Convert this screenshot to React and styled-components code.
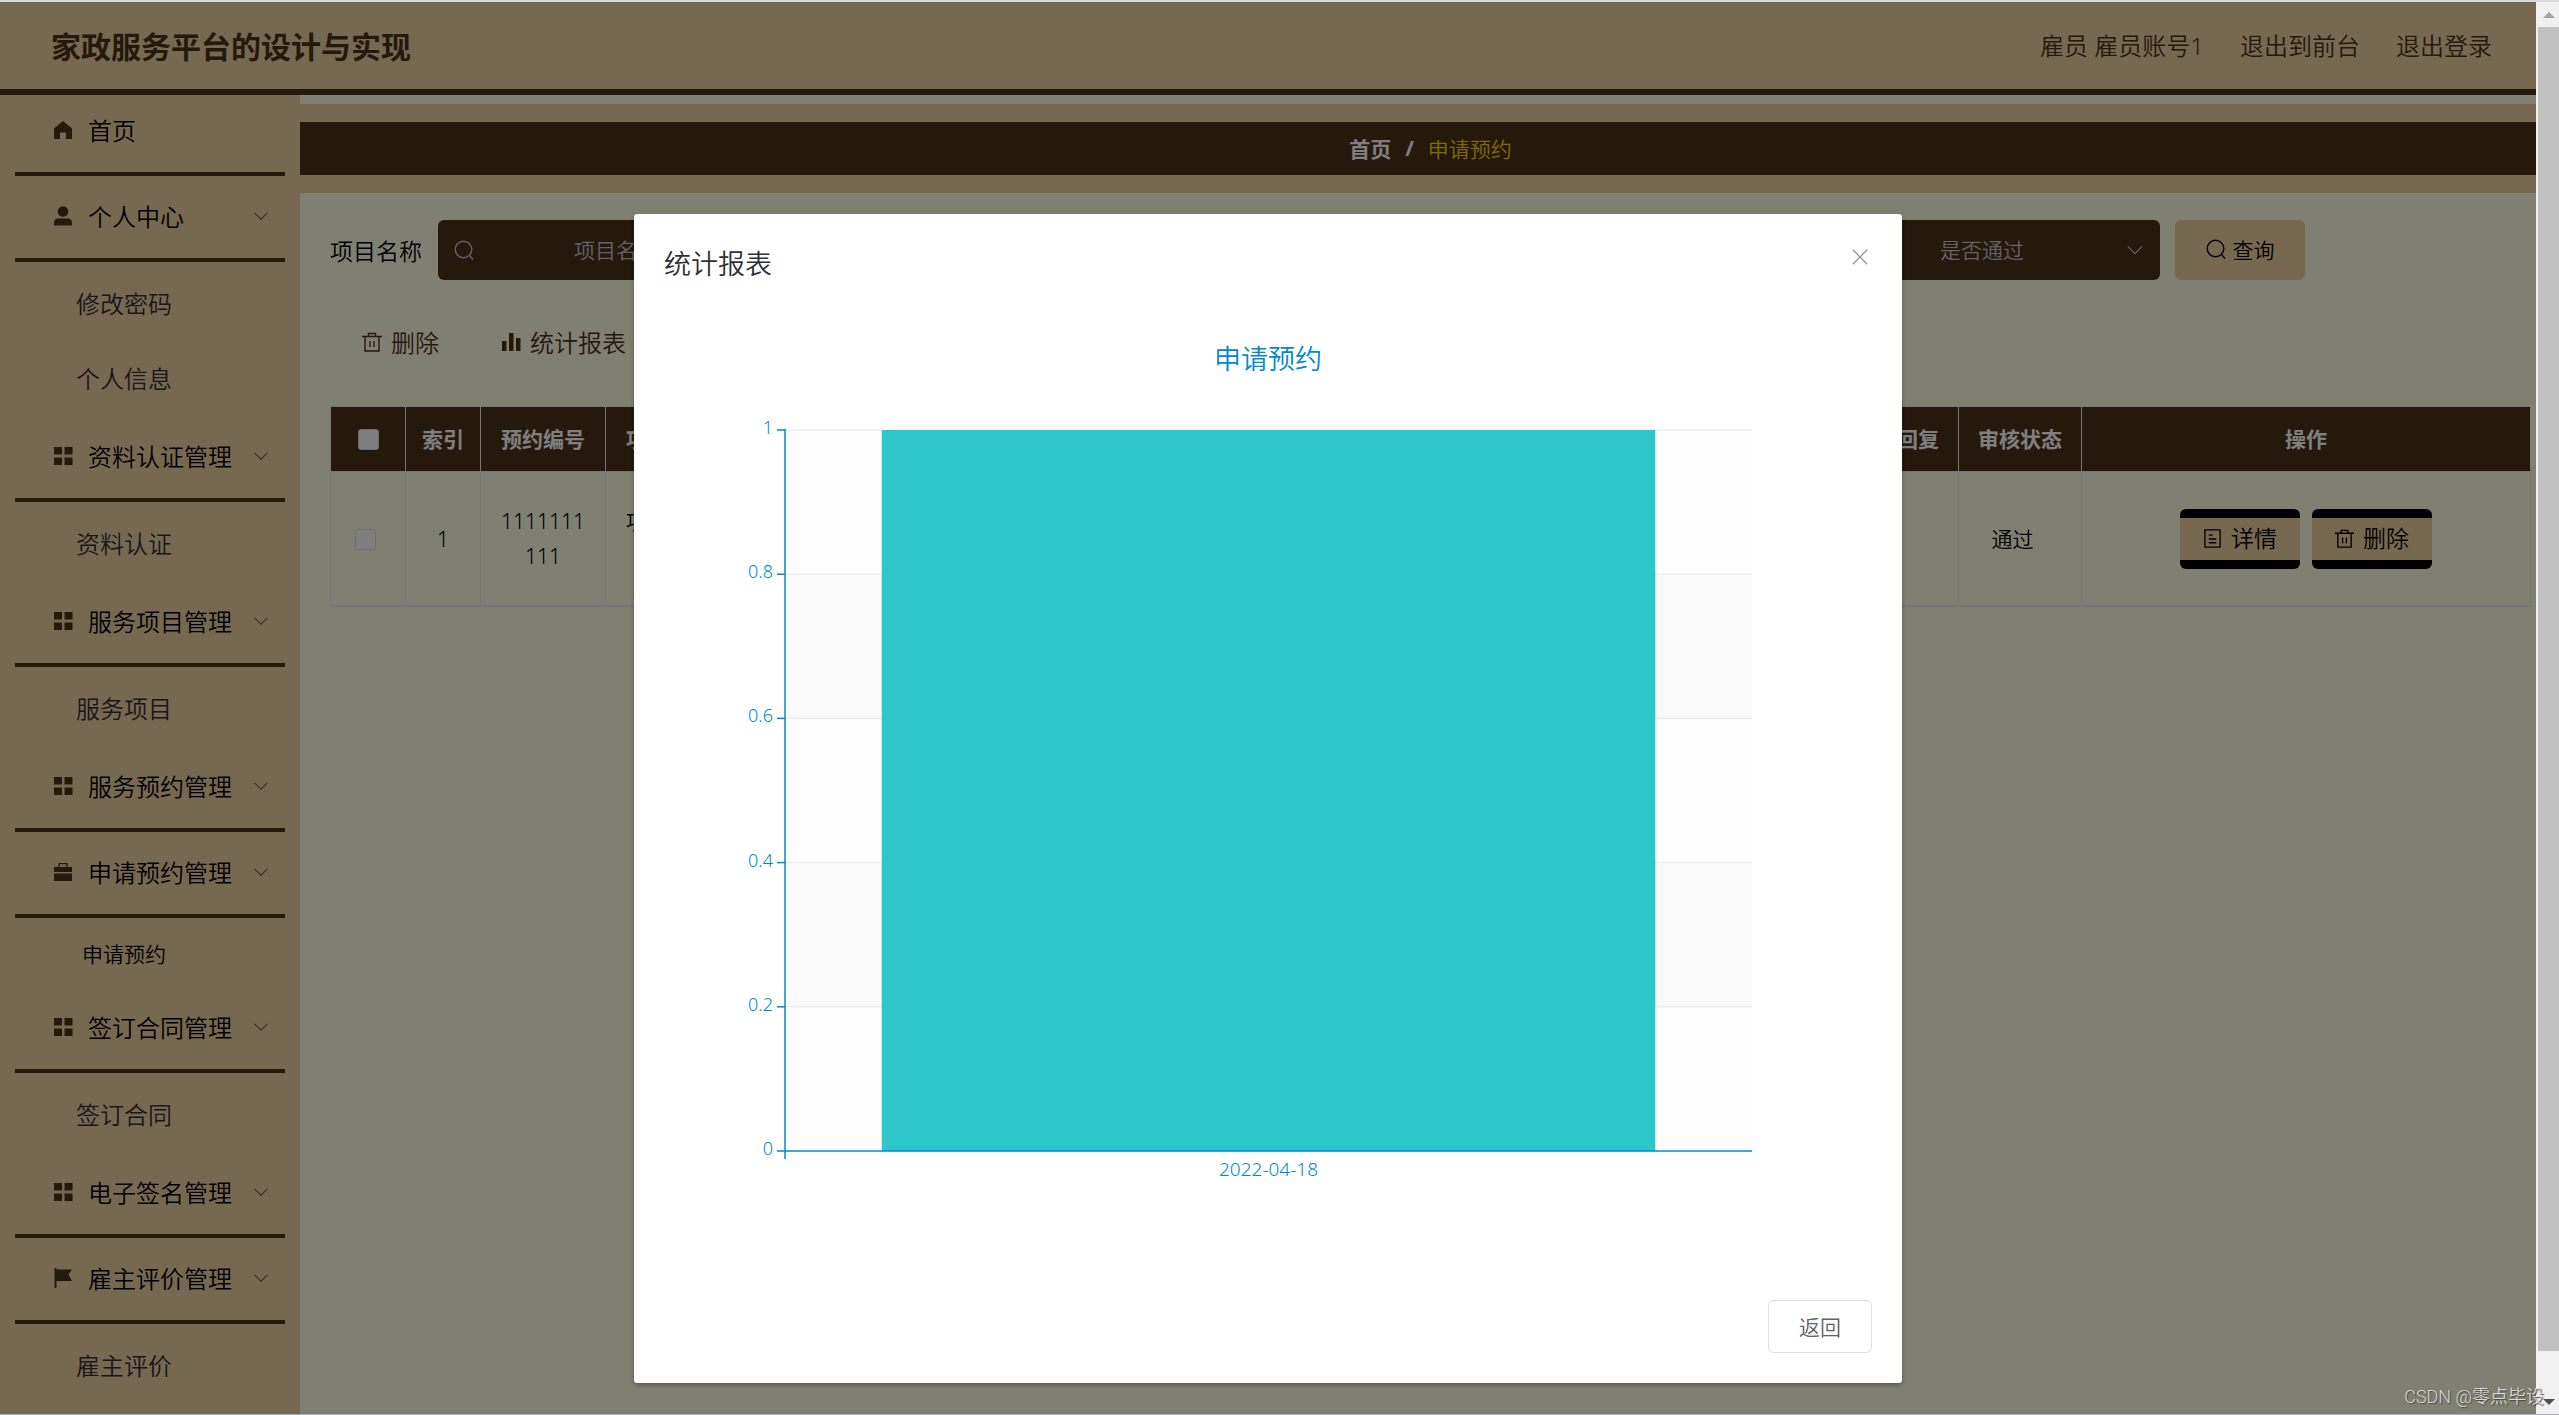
import React, { useState } from "react"
import styled, { createGlobalStyle } from 'styled-components'

const menu = [
  { label: '首页', icon: 'home' },
  { label: '个人中心', icon: 'user', children: ['修改密码', '个人信息'] },
  { label: '资料认证管理', icon: 'grid', children: ['资料认证'] },
  { label: '服务项目管理', icon: 'grid', children: ['服务项目'] },
  { label: '服务预约管理', icon: 'grid', collapsed: true },
  { label: '申请预约管理', icon: 'case', children: ['申请预约'] },
  { label: '签订合同管理', icon: 'grid', children: ['签订合同'] },
  { label: '电子签名管理', icon: 'grid', collapsed: true },
  { label: '雇主评价管理', icon: 'flag', children: ['雇主评价'] },
]

const ticks = [1, 0.8, 0.6, 0.4, 0.2, 0]
const data = [{ day: '2022-04-18', value: 1 }]

function Icon({ name, size = 20 }){
  const line = { fill: 'none', stroke: 'currentColor', strokeWidth: 1.4 }
  const shapes = {
    home: <path fill="currentColor" d="M10 1 1 8.5V19h6v-6.500h6V19h6V8.500z"/>,
    user: <g fill="currentColor"><ellipse cx="10" cy="5.500" rx="5.300" ry="5.300"/><path d="M1 17c0-3 1.500-4.500 4-4.500h10c2.500 0 4 1.500 4 4.500v2.500H1z"/></g>,
    grid: <path fill="currentColor" d="M1 1h8v7.500H1zM11.500 1h8v7.500h-8zM1 11.500h8V19H1zM11.500 11.500h8V19h-8z"/>,
    case: <g fill="currentColor"><path d="M5.500 5V1h9v4h-1.300V2.300H6.800V5z"/><path d="M1 5h18v5H1zM1 11.500h18V19H1z"/></g>,
    flag: <path fill="currentColor" d="M1.500 0h2v1.500H19l-3.500 5L19 13H3.500v7h-2z"/>,
    search: <g {...line}><circle cx="9.500" cy="9.500" r="8.300"/><path d="m15.500 15.500 3.500 4"/></g>,
    trash: <g {...line}><path d="M0 4.500h20M3 4.500V19h14V4.500M6.500 4.500v-3h7v3M8 9v6M12 9v6"/></g>,
    bars: <path fill="currentColor" d="M1 9h4.500v10H1zM8 1h4.500v18H8zM15 6h4.500v13H15z"/>,
    doc: <g {...line}><path d="M2 1h16v18H2zM6 6.500h4M6 10.500h8M6 14.500h8"/></g>,
    down: <path {...line} d="m2 6 8 8 8-8"/>,
    close: <path {...line} d="m2 2 16 16M18 2 2 18"/>,
  }
  return <svg width={size} height={size} viewBox="0 0 20 20" aria-hidden="true">{shapes[name]}</svg>
}

function Sidebar(){
  return(
    <Aside>
      {menu.map(item => (
        <React.Fragment key={item.label}>
          <MenuItem href="#">
            <Icon name={item.icon}/>
            <span>{item.label}</span>
            {(item.children || item.collapsed) && <Icon name="down" size={16}/>}
          </MenuItem>
          {item.children && (
            <SubMenu>
              {item.children.map(child => (
                <SubItem key={child} href="#" $active={child === '申请预约'}>{child}</SubItem>
              ))}
            </SubMenu>
          )}
        </React.Fragment>
      ))}
    </Aside>
  )
}

function Chart(){
  const left = 121, right = 1088, top = 94, bottom = 815
  const step = (bottom - top) / 5
  const band = (right - left) / data.length
  return(
    <ChartSvg viewBox="0 0 1208 910" role="img" aria-label="申请预约">
      <text className="title" x="604" y="33">申请预约</text>
      {ticks.slice(0, -1).map((t, i) => (
        <rect key={t} x={left} y={top + i * step} width={right - left} height={step} fill={i % 2 ? '#f9f9f9' : '#fefefe'}/>
      ))}
      {ticks.slice(0, -1).map((t, i) => (
        <path key={t} d={`M${left} ${top + i * step}H${right}`} stroke="#eee" strokeWidth="1.5"/>
      ))}
      {data.map((d, i) => (
        <rect key={d.day} x={left + band * (i + .1)} y={bottom - d.value * (bottom - top)}
          width={band * .8} height={d.value * (bottom - top)} fill="#2ec7c9"/>
      ))}
      <path d={`M${left} ${top - 1}V${bottom + 8}M${left} ${bottom}H${right}`} stroke="#008acd" strokeWidth="1.5"/>
      {ticks.map((t, i) => (
        <g key={t}>
          <path d={`M${left - 8} ${top + i * step}h8`} stroke="#008acd" strokeWidth="1.5"/>
          <text className="value" x={left - 12} y={top + i * step + 4}>{t}</text>
        </g>
      ))}
      {data.map((d, i) => (
        <text key={d.day} className="day" x={left + band * (i + .5)} y={bottom + 25}>{d.day}</text>
      ))}
    </ChartSvg>
  )
}

function App(){
  const [open, setOpen] = useState(true)

  return(
    <Frame>
      <GlobalStyle/>
      <Page>
        <Header>
          <h1>家政服务平台的设计与实现</h1>
          <nav>
            <span>雇员 雇员账号1</span>
            <a href="#">退出到前台</a>
            <a href="#">退出登录</a>
          </nav>
        </Header>
        <Body>
          <Sidebar/>
          <Main>
            <Breadcrumb>
              <a href="#">首页</a>
              <b>/</b>
              <span>申请预约</span>
            </Breadcrumb>
            <Content>
              <SearchForm onSubmit={e => e.preventDefault()}>
                <label htmlFor="name">项目名称</label>
                <Field>
                  <Icon name="search"/>
                  <input id="name" placeholder="项目名称"/>
                </Field>
                <Field $last>
                  <select aria-label="是否通过" defaultValue="">
                    <option value="">是否通过</option>
                  </select>
                  <Icon name="down" size={18}/>
                </Field>
                <QueryButton><Icon name="search"/>查询</QueryButton>
              </SearchForm>
              <Toolbar>
                <button><Icon name="trash"/>删除</button>
                <button><Icon name="bars"/>统计报表</button>
              </Toolbar>
              <Table>
                <colgroup>
                  <col width="75"/><col width="75"/><col width="125"/><col width="125"/>
                  <col/><col width="123"/><col width="123"/><col width="449"/>
                </colgroup>
                <thead>
                  <tr>
                    <th><Check type="checkbox" aria-label="全选"/></th>
                    <th>索引</th>
                    <th>预约编号</th>
                    <th>项目名称</th>
                    <th></th>
                    <th>审核回复</th>
                    <th>审核状态</th>
                    <th>操作</th>
                  </tr>
                </thead>
                <tbody>
                  <tr>
                    <SideCell><Check type="checkbox" aria-label="选择"/></SideCell>
                    <td>1</td>
                    <td>1111111111</td>
                    <td>项目名称1</td>
                    <td></td>
                    <td></td>
                    <StatusCell>通过</StatusCell>
                    <td>
                      <Actions>
                        <RowButton><Icon name="doc" size={19}/>详情</RowButton>
                        <RowButton><Icon name="trash" size={19}/>删除</RowButton>
                      </Actions>
                    </td>
                  </tr>
                </tbody>
              </Table>
            </Content>
          </Main>
        </Body>
        {open && (
          <Overlay>
            <Dialog role="dialog" aria-label="统计报表">
              <DialogHead>
                <h2>统计报表</h2>
                <button aria-label="关闭" onClick={() => setOpen(false)}><Icon name="close" size={18}/></button>
              </DialogHead>
              <Chart/>
              <DialogFoot>
                <button onClick={() => setOpen(false)}>返回</button>
              </DialogFoot>
            </Dialog>
          </Overlay>
        )}
      </Page>
      <Scrollbar><i/><div/><i/></Scrollbar>
      <Watermark>CSDN @零点毕设</Watermark>
    </Frame>
  )
}

const GlobalStyle = createGlobalStyle`
  *{
    box-sizing:border-box;
  }
  body{
    margin:0;
    font-family:"Noto Sans", "Noto Sans CJK SC", sans-serif;
    font-size:21px;
    font-weight:350;
    color:#000;
  }
  button, input, select{
    font:inherit;
    color:inherit;
  }
  button{
    display:flex;
    align-items:center;
    justify-content:center;
    cursor:pointer;
  }
  a{
    color:inherit;
    text-decoration:none;
  }
  svg{
    flex:none;
  }
`

const Frame = styled.div`
  display:flex;
  position:relative;
  height:100vh;
  overflow:hidden;
  border-top:2px solid #d9dbde;
  border-bottom:1px solid #a9b2bf;
`

const Page = styled.div`
  display:flex;
  position:relative;
  flex:1;
  flex-direction:column;
  min-width:0;
`

const Header = styled.header`
  display:flex;
  flex:none;
  align-items:center;
  justify-content:space-between;
  height:93px;
  padding:0 44px 2px 51px;
  background:#eed0a4;
  border-bottom:6px solid #4a3218;
  color:#4a3218;
  h1{
    margin:0;
    font-size:30px;
  }
  nav{
    display:flex;
    gap:36px;
    font-size:24px;
  }
`

const Body = styled.div`
  display:flex;
  flex:1;
  min-height:0;
`

const Aside = styled.aside`
  flex:none;
  width:300px;
  padding:0 15px;
  overflow:hidden;
  background:#eed0a4;
`

const MenuItem = styled.a`
  display:flex;
  align-items:center;
  height:86px;
  padding:0 16px 3px 38px;
  border-bottom:4px solid #4a3218;
  color:#4a3218;
  font-size:24px;
  &:first-child{
    height:81px;
    padding-bottom:8px;
  }
  span{
    flex:1;
    margin-left:15px;
    color:#000;
  }
  span + svg{
    opacity:.7;
  }
`

const SubMenu = styled.div`
  padding-top:4px;
`

const SubItem = styled.a`
  display:flex;
  align-items:center;
  height:${p => p.$active ? 65 : 75}px;
  padding-bottom:3px;
  padding-left:${p => p.$active ? 67 : 61}px;
  font-size:${p => p.$active ? 21 : 24}px;
  color:${p => p.$active ? '#000' : '#303133'};
`

const Main = styled.main`
  flex:1;
  min-width:0;
  padding-top:9px;
  background:#fefee4;
`

const Breadcrumb = styled.nav`
  display:flex;
  align-items:center;
  justify-content:center;
  gap:14px;
  height:89px;
  padding:0 0 2px 25px;
  border:solid #eed0a4;
  border-width:18px 0;
  background:#4a3218;
  color:#fff;
  a, b{
    font-weight:bold;
  }
  span{
    color:#ffd700;
  }
`

const Content = styled.div`
  padding:27px 5px 0 30px;
`

const SearchForm = styled.form`
  display:flex;
  align-items:center;
  padding-right:226px;
  label{
    margin-right:16px;
    font-size:23px;
  }
`

const Field = styled.div`
  display:flex;
  align-items:center;
  width:354px;
  height:60px;
  padding:0 16px;
  margin-left:${p => p.$last ? 'auto' : '0'};
  border-radius:6px;
  background:#4a3218;
  color:#c0c4cc;
  input, select{
    flex:1;
    min-width:0;
    padding:0 18px 0 0;
    border:0;
    outline:0;
    appearance:none;
    background:transparent;
    text-align:center;
    text-align-last:center;
  }
  select{
    padding:0 0 0 16px;
  }
  input::placeholder{
    color:#c0c4cc;
  }
`

const QueryButton = styled.button`
  width:130px;
  height:60px;
  gap:7px;
  margin-left:15px;
  padding:0 0 2px;
  border:0;
  border-radius:6px;
  background:#eed0a4;
`

const Toolbar = styled.div`
  display:flex;
  gap:62px;
  padding:39px 32px 42px;
  button{
    gap:9px;
    height:45px;
    padding:0;
    border:0;
    background:transparent;
    color:#4a3218;
    font-size:24px;
  }
`

const Table = styled.table`
  width:100%;
  table-layout:fixed;
  border-collapse:collapse;
  border-bottom:2px solid #ebeef5;
  th, td{
    padding:0 15px;
    border:1px solid #ebeef5;
    line-height:35px;
    text-align:center;
    word-break:break-all;
  }
  th{
    height:65px;
    background:#4a3218;
    color:#fff;
    font-weight:bold;
  }
  td{
    height:134px;
    padding-top:2px;
  }
`

const SideCell = styled.td`
  && {
    padding-right:20px;
  }
`

const StatusCell = styled.td`
  && {
    padding-right:30px;
  }
`

const Check = styled.input`
  display:block;
  width:21px;
  height:21px;
  margin:0 auto;
  appearance:none;
  border:1px solid #dcdfe6;
  border-radius:3px;
  background:#fff;
`

const Actions = styled.div`
  display:flex;
  justify-content:center;
  gap:12px;
`

const RowButton = styled.button`
  gap:9px;
  width:120px;
  height:60px;
  padding:0 0 2px;
  border:solid #000;
  border-width:9px 0;
  border-radius:6px;
  background:#eed0a4;
  font-size:23px;
`

const Overlay = styled.div`
  position:absolute;
  inset:0;
  display:flex;
  align-items:flex-start;
  justify-content:center;
  padding-top:212px;
  background:rgba(0,0,0,.5);
`

const Dialog = styled.section`
  width:50%;
  padding:30px;
  border-radius:3px;
  background:#fff;
  box-shadow:0 2px 5px rgba(0,0,0,.3);
`

const DialogHead = styled.div`
  display:flex;
  align-items:flex-start;
  justify-content:space-between;
  height:92px;
  h2{
    margin:0;
    color:#303133;
    font-size:27px;
    font-weight:inherit;
    line-height:40px;
  }
  button{
    height:26px;
    padding:0 3px;
    border:0;
    background:transparent;
    color:#909399;
  }
`

const ChartSvg = styled.svg`
  display:block;
  width:100%;
  font-size:18px;
  fill:#008acd;
  text-anchor:middle;
  .title{
    font-size:27px;
  }
  .value{
    text-anchor:end;
  }
  .day{
    font-size:19px;
  }
`

const DialogFoot = styled.div`
  display:flex;
  justify-content:flex-end;
  padding-top:54px;
  button{
    width:104px;
    height:53px;
    padding:0 0 2px;
    border:1px solid #dcdfe6;
    border-radius:6px;
    background:#fff;
    color:#606266;
  }
`

const Scrollbar = styled.div`
  display:flex;
  flex:none;
  flex-direction:column;
  align-items:center;
  width:23px;
  padding-left:2px;
  background:#f0f0f0;
  div{
    flex:1;
    align-self:stretch;
    margin:9px 0 48px;
    background:#c1c1c1;
  }
  i{
    border:6px solid transparent;
    &:first-child{
      margin-top:10px;
      border-top:0;
      border-bottom-color:#a3a3a3;
    }
    &:last-child{
      margin-bottom:9px;
      border-bottom:0;
      border-top-color:#505050;
    }
  }
`

const Watermark = styled.div`
  position:absolute;
  right:15px;
  bottom:6px;
  color:rgba(235,235,235,.85);
  font-family:Roboto, "Noto Sans CJK SC", sans-serif;
  font-size:18px;
  text-shadow:1px 1px 1px #444;
`

export default App
